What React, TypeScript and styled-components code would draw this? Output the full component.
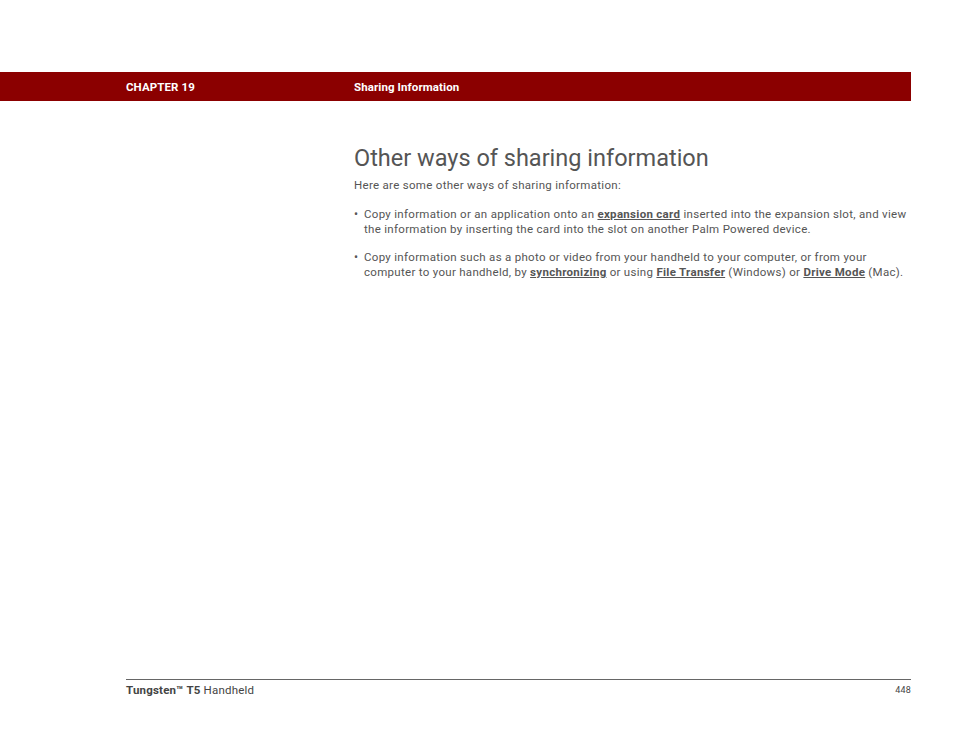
import React from 'react';
import styled, { createGlobalStyle } from 'styled-components';

const Global = createGlobalStyle`
  html, body { margin: 0; padding: 0; background: #fff; }
  body { font-family: 'Roboto', 'Liberation Sans', sans-serif; }
`;

const Page = styled.div`
  width: 954px;
  height: 738px;
  display: flex;
  flex-direction: column;
  padding-top: 72px;
  box-sizing: border-box;
`;

const HeaderBar = styled.div`
  width: 911px;
  height: 29px;
  background: #8b0000;
  display: flex;
  align-items: center;
  color: #fff;
  font-size: 11.5px;
  font-weight: 700;
  letter-spacing: 0.1px;
`;

const Chapter = styled.span`
  width: 228px;
  padding-left: 126px;
`;

const Content = styled.div`
  flex: 1;
  padding: 43px 0 0 354px;
  color: #555;
  font-size: 11.5px;
  line-height: 15px;
  letter-spacing: 0.3px;
`;

const Heading = styled.h1`
  margin: 0 0 6px;
  font-size: 23.5px;
  font-weight: 400;
  line-height: 28px;
  color: #555;
  letter-spacing: 0;
`;

const Para = styled.p`
  margin: 0 0 14px;
`;

const List = styled.ul`
  margin: 0;
  padding: 0;
  list-style: none;
  width: 556px;
`;

const Item = styled.li`
  position: relative;
  padding-left: 10px;
  margin-bottom: 13px;
  &::before {
    content: '•';
    position: absolute;
    left: 0;
    font-size: 12px;
  }
`;

const Link = styled.a`
  font-weight: 700;
  color: #555;
  text-decoration: underline;
`;

const Footer = styled.div`
  margin: 0 43px 0 126px;
  border-top: 1px solid #666;
  height: 55px;
  display: flex;
  justify-content: space-between;
  padding-top: 3px;
  color: #444;
  font-size: 11.5px;
  letter-spacing: 0.2px;
`;

const Num = styled.span`
  font-size: 9px;
  padding-top: 2px;
`;

export default function App() {
  return (
    <Page>
      <Global />
      <HeaderBar>
        <Chapter>CHAPTER 19</Chapter>
        <span>Sharing Information</span>
      </HeaderBar>
      <Content>
        <Heading>Other ways of sharing information</Heading>
        <Para>Here are some other ways of sharing information:</Para>
        <List>
          <Item>
            Copy information or an application onto an <Link>expansion card</Link> inserted into the
            expansion slot, and view the information by inserting the card into the slot on another Palm
            Powered device.
          </Item>
          <Item>
            Copy information such as a photo or video from your handheld to your computer, or from your
            computer to your handheld, by <Link>synchronizing</Link> or using <Link>File Transfer</Link>{' '}
            (Windows) or <Link>Drive Mode</Link> (Mac).
          </Item>
        </List>
      </Content>
      <Footer>
        <span>
          <b>Tungsten™ T5</b> Handheld
        </span>
        <Num>448</Num>
      </Footer>
    </Page>
  );
}
